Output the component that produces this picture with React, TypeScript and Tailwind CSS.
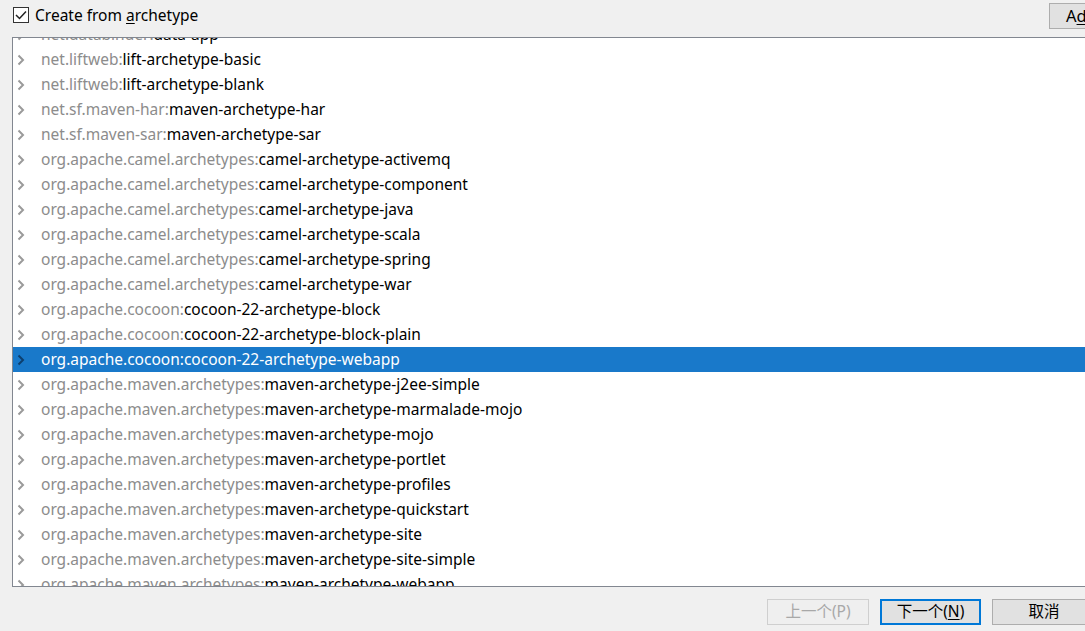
import React from "react";

const rows: [string, string][] = [
  ["net.databinder:", "data-app"],
  ["net.liftweb:", "lift-archetype-basic"],
  ["net.liftweb:", "lift-archetype-blank"],
  ["net.sf.maven-har:", "maven-archetype-har"],
  ["net.sf.maven-sar:", "maven-archetype-sar"],
  ["org.apache.camel.archetypes:", "camel-archetype-activemq"],
  ["org.apache.camel.archetypes:", "camel-archetype-component"],
  ["org.apache.camel.archetypes:", "camel-archetype-java"],
  ["org.apache.camel.archetypes:", "camel-archetype-scala"],
  ["org.apache.camel.archetypes:", "camel-archetype-spring"],
  ["org.apache.camel.archetypes:", "camel-archetype-war"],
  ["org.apache.cocoon:", "cocoon-22-archetype-block"],
  ["org.apache.cocoon:", "cocoon-22-archetype-block-plain"],
  ["org.apache.cocoon:", "cocoon-22-archetype-webapp"],
  ["org.apache.maven.archetypes:", "maven-archetype-j2ee-simple"],
  ["org.apache.maven.archetypes:", "maven-archetype-marmalade-mojo"],
  ["org.apache.maven.archetypes:", "maven-archetype-mojo"],
  ["org.apache.maven.archetypes:", "maven-archetype-portlet"],
  ["org.apache.maven.archetypes:", "maven-archetype-profiles"],
  ["org.apache.maven.archetypes:", "maven-archetype-quickstart"],
  ["org.apache.maven.archetypes:", "maven-archetype-site"],
  ["org.apache.maven.archetypes:", "maven-archetype-site-simple"],
  ["org.apache.maven.archetypes:", "maven-archetype-webapp"],
];

const SELECTED = 13;

function Chevron({ selected }: { selected: boolean }) {
  return (
    <svg width="8" height="12" viewBox="0 0 8 12" className="shrink-0">
      <path
        d="M1.5 1.5 L6 6 L1.5 10.5"
        fill="none"
        stroke={selected ? "#0d3f6e" : "#9a9a9a"}
        strokeWidth="2"
      />
    </svg>
  );
}

export default function App() {
  return (
    <div
      className="flex h-[631px] w-[1085px] flex-col overflow-hidden bg-[#f0f0f0] text-[15.5px] text-black"
      style={{ fontFamily: '"Noto Sans", "Noto Sans CJK SC", sans-serif' }}
    >
      <div className="flex h-[37px] shrink-0 items-start">
        <div className="ml-[13px] mt-[7px] flex h-[16px] w-[16px] items-center justify-center border border-[#333] bg-white">
          <svg width="12" height="10" viewBox="0 0 12 10">
            <path d="M1 5 L4.5 8.5 L11 1.5" fill="none" stroke="#222" strokeWidth="1.5" />
          </svg>
        </div>
        <span className="ml-[6px] mt-[4px] leading-[22px]">
          Create from <span className="underline underline-offset-2">a</span>rchetype
        </span>
        <div className="ml-auto mr-[-40px] mt-[3px] flex h-[26px] w-[76px] items-center border border-[#adadad] bg-[#e1e1e1] pl-[16px] text-[16.5px] leading-none">
          A<span className="underline underline-offset-2">d</span>d
        </div>
      </div>

      <div className="ml-[12px] mr-[-2px] h-[550px] shrink-0 overflow-hidden border border-[#828790] bg-white text-[15.5px]">
        <div className="mt-[-16px]">
          {rows.map(([group, artifact], i) => {
            const selected = i === SELECTED;
            return (
              <div
                key={i}
                className={`flex h-[25px] items-center whitespace-nowrap pl-[4px] ${
                  selected ? "bg-[#1979ca] text-white" : ""
                }`}
              >
                <Chevron selected={selected} />
                <span className="ml-[16px]">
                  <span className={selected ? "text-white" : "text-[#8c8c8c]"}>{group}</span>
                  <span>{artifact}</span>
                </span>
              </div>
            );
          })}
        </div>
      </div>

      <div className="mt-[12px] flex items-start">
        <div className="ml-[767px] flex h-[26px] w-[102px] items-center justify-center border border-[#cfcfcf] bg-[#efefef] text-[#a8a8a8]">
          上一个(P)
        </div>
        <div className="ml-[11px] flex h-[26px] w-[101px] items-center justify-center border-2 border-[#0078d7] bg-[#e1e1e1]">
          下一个(<span className="underline underline-offset-2">N</span>)
        </div>
        <div className="ml-[11px] mr-[-20px] flex h-[26px] w-[104px] shrink-0 items-center justify-center border border-[#adadad] bg-[#e1e1e1]">
          取消
        </div>
      </div>
    </div>
  );
}
